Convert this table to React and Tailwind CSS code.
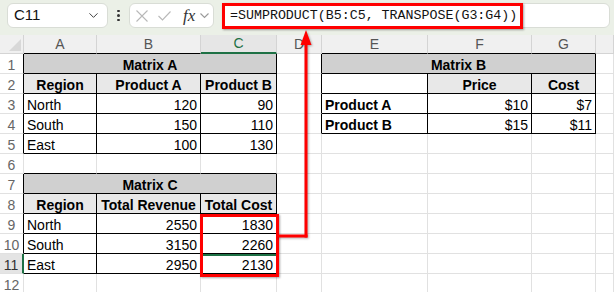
import { ChevronDown } from "lucide-react";

const GRID = "grid grid-cols-[24px_73px_104px_76px_45px_106px_104px_64px_1fr]";

// row -> list of cells starting at col 1 (A)
const SHEET = {
    1: [{ t: "Matrix A", k: "title", span: 3 }, null, { t: "Matrix B", k: "title", span: 3 }, null],
    2: [{ t: "Region", k: "hdr" }, { t: "Product A", k: "hdr" }, { t: "Product B", k: "hdr" }, null, { t: "", k: "blank" }, { t: "Price", k: "hdr" }, { t: "Cost", k: "hdr" }, null],
    3: [{ t: "North", k: "txt" }, { t: "120", k: "num" }, { t: "90", k: "num" }, null, { t: "Product A", k: "bold" }, { t: "$10", k: "num" }, { t: "$7", k: "num" }, null],
    4: [{ t: "South", k: "txt" }, { t: "150", k: "num" }, { t: "110", k: "num" }, null, { t: "Product B", k: "bold" }, { t: "$15", k: "num" }, { t: "$11", k: "num" }, null],
    5: [{ t: "East", k: "txt" }, { t: "100", k: "num" }, { t: "130", k: "num" }, null, null, null, null, null],
    6: [null, null, null, null, null, null, null, null],
    7: [{ t: "Matrix C", k: "title", span: 3 }, null, null, null, null, null],
    8: [{ t: "Region", k: "hdr" }, { t: "Total Revenue", k: "hdr" }, { t: "Total Cost", k: "hdr" }, null, null, null, null, null],
    9: [{ t: "North", k: "txt" }, { t: "2550", k: "num" }, { t: "1830", k: "num" }, null, null, null, null, null],
    10: [{ t: "South", k: "txt" }, { t: "3150", k: "num" }, { t: "2260", k: "num" }, null, null, null, null, null],
    11: [{ t: "East", k: "txt" }, { t: "2950", k: "num" }, { t: "2130", k: "num", sel: true }, null, null, null, null, null],
    12: [null, null, null, null, null, null, null, null],
};

const inTable = (r, c) =>
    (r >= 1 && r <= 5 && c >= 1 && c <= 3) ||
    (r >= 1 && r <= 4 && c >= 5 && c <= 7) ||
    (r >= 7 && r <= 11 && c >= 1 && c <= 3);

const KIND = {
    title: "bg-[#d0d0d0] font-bold justify-center col-span-3",
    hdr: "bg-[#e8e8e8] font-bold justify-center",
    blank: "bg-white",
    txt: "bg-white justify-start",
    bold: "bg-white font-bold justify-start",
    num: "bg-white justify-end",
};

function Row({ r }) {
    const cells = [];
    let c = 1;
    for (const cell of SHEET[r]) {
        if (c > 8) break;
        const span = cell?.span || 1;
        const last = c + span - 1;
        let bottomBlack = false;
        for (let i = c; i <= last; i++) if (inTable(r, i) || inTable(r + 1, i)) bottomBlack = true;
        const rightBlack = inTable(r, last) || inTable(r, last + 1);
        cells.push(
            <div
                key={c}
                className={`h-[20px] box-border border-r border-b flex items-start pt-[3px] px-[3px] text-[14px] leading-[16px] text-black whitespace-nowrap overflow-hidden ${rightBlack ? "border-r-black" : "border-r-[#e1e1e1]"} ${bottomBlack ? "border-b-black" : "border-b-[#e1e1e1]"} ${cell ? KIND[cell.k] : ""} ${cell?.sel ? "shadow-[inset_0_2px_0_#1e7145]" : ""}`}
            >
                {cell?.t}
            </div>
        );
        c += span;
    }

    const selRow = r === 11;
    return (
        <>
            <div
                className={`h-[20px] box-border border-b border-b-[#e1e1e1] flex items-start justify-center pt-[3px] text-[14px] leading-[16px] ${selRow ? "border-r-2 border-r-[#1e7145] bg-[#e4e4e4] text-[#333]" : inTable(r, 1) ? "border-r border-r-black bg-white text-[#666]" : "border-r border-r-[#e1e1e1] bg-white text-[#666]"}`}
            >
                {r}
            </div>
            {cells}
        </>
    );
}

function Toolbar() {
    return (
        <div className="relative h-[35px] bg-[#ebf0e7] flex items-start pt-[3px] pl-[7px] pr-[4px]">
            <div className="w-[101px] h-[25px] box-border rounded-[6px] border border-[#d9ddd6] bg-white flex items-center justify-between pl-[6px] pr-[6px]">
                <span className="text-[15px] text-[#111]">C11</span>
                <ChevronDown size={15} strokeWidth={1.5} color="#333" />
            </div>
            <div className="w-[21px] h-[25px] flex flex-col items-center justify-center gap-[2px]">
                <span className="w-[2.5px] h-[2.5px] bg-[#333] rounded-full"></span>
                <span className="w-[2.5px] h-[2.5px] bg-[#333] rounded-full"></span>
                <span className="w-[2.5px] h-[2.5px] bg-[#333] rounded-full"></span>
            </div>
            <div className="w-[85px] h-[25px] box-border rounded-[6px] border border-[#d9ddd6] bg-white flex items-center pl-[6px]">
                <svg width="12" height="12" viewBox="0 0 12 12">
                    <path d="M0.5 0.5 11.5 11.5 M11.5 0.5 0.5 11.5" stroke="#b8b8b8" strokeWidth="1.1" fill="none" />
                </svg>
                <svg width="13" height="10" viewBox="0 0 13 10" className="ml-[10px] mt-[1px]">
                    <path d="M0.5 5 4.5 9 12.5 0.5" stroke="#b8b8b8" strokeWidth="1.1" fill="none" />
                </svg>
                <span className="font-['Liberation_Serif'] italic text-[17px] leading-[20px] text-[#333] ml-[12px]">fx</span>
                <svg width="9" height="6" viewBox="0 0 9 6" className="ml-[5px]">
                    <path d="M0.5 0.5 4.5 4.5 8.5 0.5" stroke="#9a9a9a" strokeWidth="1.1" fill="none" />
                </svg>
            </div>
            <div className="flex-1 ml-[8px] h-[25px] box-border rounded-[6px] border border-[#d9ddd6] bg-white flex items-center pl-[7px]">
                <span className="font-['Liberation_Mono'] text-[13.3px] text-[#111]">=SUMPRODUCT(B5:C5, TRANSPOSE(G3:G4))</span>
            </div>
            {/* annotation box over the formula */}
            <div className="absolute left-[222px] top-[3px] w-[301px] h-[26px] border-[3px] border-[#ff0000] shadow-[1px_1px_2px_rgba(0,0,0,0.35)]"></div>
        </div>
    );
}

function ColumnHeader() {
    const cols = ["A", "B", "C", "D", "E", "F", "G", ""];
    return (
        <>
            <div className="h-[19px] box-border border-r border-b border-[#d4d4d4] bg-[#f0f0f0] flex items-end justify-end pr-[2px] pb-[2px]">
                <svg width="12" height="12" viewBox="0 0 12 12">
                    <polygon points="12,0 12,12 0,12" fill="#d8d8d8" />
                </svg>
            </div>
            {cols.map((c, i) => {
                const sel = c === "C";
                return (
                    <div
                        key={i}
                        className={`h-[19px] box-border border-r border-r-[#d4d4d4] flex items-center justify-center text-[14px] ${sel ? "border-b-2 border-b-[#1e7145] bg-[#e6e6e6] text-[#1e7145]" : inTable(1, i + 1) ? "border-b border-b-black bg-[#f0f0f0] text-[#555]" : "border-b border-b-[#d4d4d4] bg-[#f0f0f0] text-[#555]"}`}
                    >
                        {c}
                    </div>
                );
            })}
        </>
    );
}

export default function App() {
    const rows = [1, 2, 3, 4, 5, 6, 7, 8, 9, 10, 11, 12];
    return (
        <div className="relative w-[614px] h-[292px] overflow-hidden bg-white font-['Liberation_Sans']">
            <Toolbar />
            <div className={GRID}>
                <ColumnHeader />
                {rows.map((r) => (
                    <Row key={r} r={r} />
                ))}
            </div>

            {/* red annotation: box around C9:C11 and arrow to the formula */}
            <div className="absolute left-[200px] top-[214px] w-[79px] h-[63px] border-[3px] border-[#ff0000] shadow-[1px_1px_2px_rgba(0,0,0,0.35)]"></div>
            <svg className="absolute left-0 top-0 pointer-events-none drop-shadow-[1px_1px_1px_rgba(0,0,0,0.3)]" width="614" height="292">
                <rect x="304.5" y="42" width="3" height="195.5" fill="#ff0000" />
                <rect x="277" y="234.5" width="30.5" height="3" fill="#ff0000" />
                <polygon points="306,30 300.5,45 311.5,45" fill="#ff0000" />
            </svg>
        </div>
    );
}
